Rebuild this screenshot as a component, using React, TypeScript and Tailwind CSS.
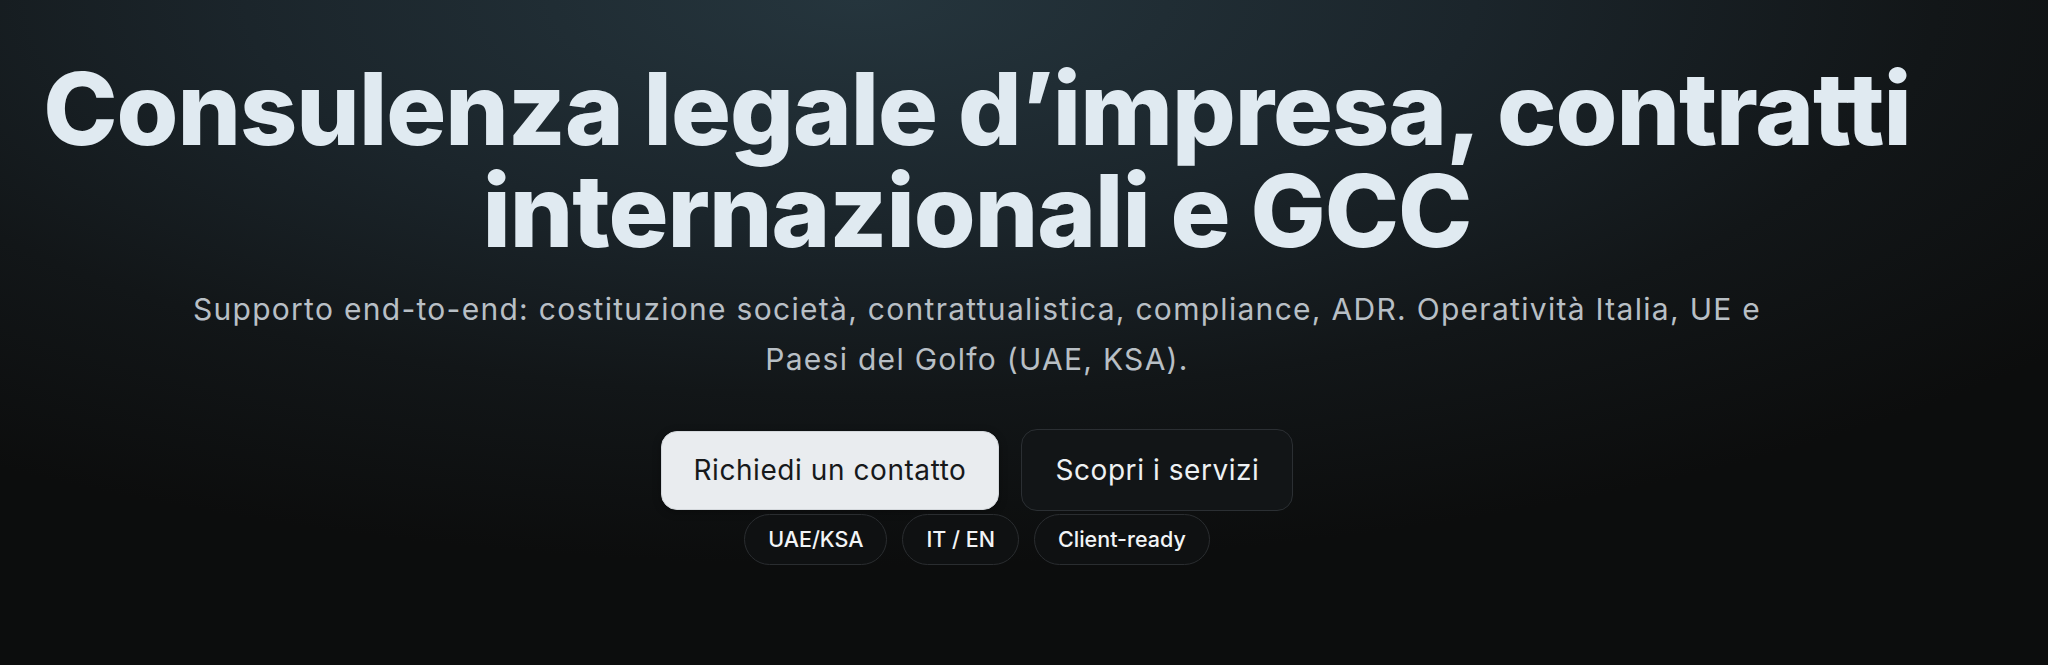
const tags = ["UAE/KSA", "IT / EN", "Client-ready"]

export default function App() {
  return (
    <div className="min-h-screen w-full overflow-hidden bg-[#0c0d0d] bg-[radial-gradient(ellipse_75%_85%_at_42%_0%,#25353d_0%,#1b252b_40%,#121618_70%,#0c0d0d_100%)] font-['Inter','Noto_Sans',sans-serif]">
      <section className="flex flex-col items-center pr-[94px] pt-[58px] pb-24 text-center">
        <h1 className="max-w-[1920px] text-[100px] font-extrabold leading-[102px] tracking-[-0.01em] text-[#e0eaf1]">
          Consulenza legale d’impresa, contratti internazionali e GCC
        </h1>
        <p className="mt-[22px] max-w-[1620px] text-[30px] leading-[50px] tracking-[0.043em] text-[#b8bfc5]">
          Supporto end-to-end: costituzione società, contrattualistica, compliance, ADR. Operatività Italia, UE e Paesi del Golfo (UAE, KSA).
        </p>
        <div className="mt-[45px] flex items-center gap-[22px]">
          <button className="h-[79px] rounded-2xl border border-[#d4d8dc] bg-[#e9ecef] px-8 text-[28px] tracking-[0.02em] text-[#17191b] shadow-[0_2px_8px_rgba(0,0,0,0.3)]">
            Richiedi un contatto
          </button>
          <button className="h-[82px] rounded-2xl border border-[#2b2f33] bg-[#121517] px-[33px] text-[28px] tracking-[0.02em] text-[#eef1f3]">
            Scopri i servizi
          </button>
        </div>
        <div className="mt-[3px] flex gap-[15px]">
          {tags.map((tag) => (
            <span key={tag} className="flex h-[51px] items-center rounded-full border border-[#2a2d30] bg-[#0f1112] px-[23px] text-[21.5px] font-medium text-[#f2f4f6]">
              {tag}
            </span>
          ))}
        </div>
      </section>
    </div>
  )
}
